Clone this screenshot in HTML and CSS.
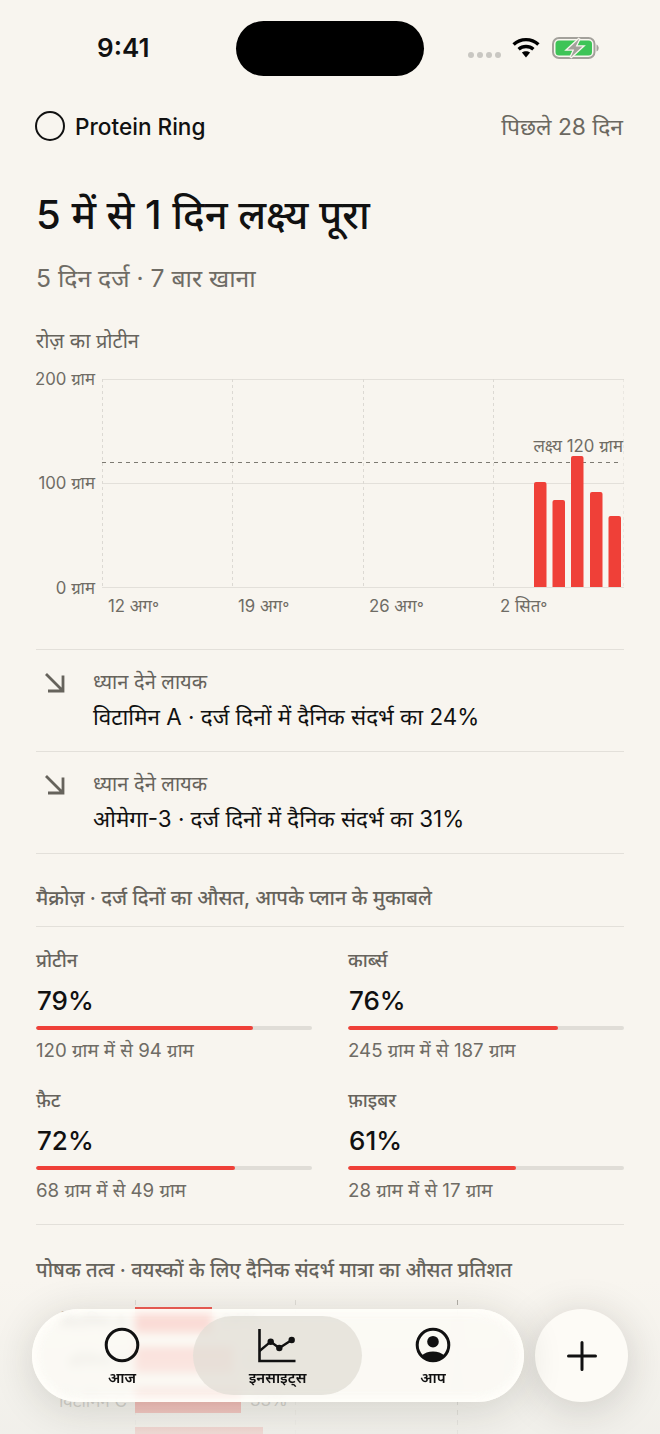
FILE: index.html
```html
<!DOCTYPE html>
<html lang="hi">
<head>
<meta charset="utf-8">
<title>Insights</title>
<link rel="stylesheet" href="styles.css">
</head>
<body>
<div class="screen">
  <div class="status">
    <span class="time">9:41</span>
    <div class="island"></div>
    <div class="status-icons">
      <svg class="dots" width="33" height="6" viewBox="0 0 33 6"><g fill="#c9c7c2"><circle cx="3" cy="3" r="3"/><circle cx="12" cy="3" r="3"/><circle cx="21" cy="3" r="3"/><circle cx="30" cy="3" r="3"/></g></svg>
      <svg class="wifi" width="28" height="21" viewBox="0 0 28 21"><g fill="none" stroke="#000" stroke-width="3.4"><path d="M1.6 7.6C8.6.9 19.4.9 26.4 7.6"/><path d="M6.6 12.2c4.2-3.7 10.6-3.7 14.8 0"/></g><path d="M9.9 15.6c2.4-1.9 5.8-1.900 8.200 0L14 20.6z" fill="#000"/></svg>
      <svg class="battery" width="47" height="22" viewBox="0 0 47 22"><rect x="1" y="1" width="41.500" height="20" rx="6" fill="none" stroke="#a3a19b" stroke-width="2"/><rect x="3.500" y="3.500" width="36.500" height="15" rx="3.500" fill="#3ec457"/><path d="M44.500 7.500c1.300.5 2.200 2 2.200 3.500s-.9 3-2.200 3.500z" fill="#a3a19b"/><path d="M27.500 1.500 15.500 12.500h6.700L18.500 20.500 30.500 9.500h-6.800z" fill="#a3a19b" stroke="#f8f5ef" stroke-width="2.600" paint-order="stroke"/></svg>
    </div>
  </div>

  <main class="content">
    <header class="top">
      <div class="brand"><span class="brand-ring"></span><span class="brand-name">Protein Ring</span></div>
      <span class="range">पिछले 28 दिन</span>
    </header>

    <h1 class="title">5 में से 1 दिन लक्ष्य पूरा</h1>
    <p class="subtitle">5 दिन दर्ज · 7 बार खाना</p>

    <h2 class="section-label chart-label">रोज़ का प्रोटीन</h2>

    <svg class="chart" width="588" height="250" viewBox="36 370 588 250">
      <g stroke="#e3e0da" stroke-width="1" fill="none">
        <path d="M102 379.500H624M102 483.500H624M102 587.500H624"/>
      </g>
      <g stroke="#dcd9d3" stroke-width="1" stroke-dasharray="3 3" fill="none">
        <path d="M102.500 379V587M232.500 379V587M363.500 379V587M493.500 379V587M624 379V587"/>
      </g>
      <path d="M102 462.500H620" stroke="#7d7a72" stroke-width="1" stroke-dasharray="4 4" fill="none"/>
      <g fill="#ef4038">
        <path d="M534 587V484a2 2 0 0 1 2-2h8.500a2 2 0 0 1 2 2V587z"/>
        <path d="M552.500 587V502a2 2 0 0 1 2-2h8.500a2 2 0 0 1 2 2V587z"/>
        <path d="M571 587V458a2 2 0 0 1 2-2h8.500a2 2 0 0 1 2 2V587z"/>
        <path d="M590 587V494a2 2 0 0 1 2-2h8.500a2 2 0 0 1 2 2V587z"/>
        <path d="M608.500 587V518a2 2 0 0 1 2-2h8.500a2 2 0 0 1 2 2V587z"/>
      </g>
      <g class="axis-text">
        <text x="95" y="385" text-anchor="end">200 ग्राम</text>
        <text x="95" y="489" text-anchor="end">100 ग्राम</text>
        <text x="95" y="594" text-anchor="end">0 ग्राम</text>
        <text x="108" y="612">12 अग॰</text>
        <text x="238" y="612">19 अग॰</text>
        <text x="369" y="612">26 अग॰</text>
        <text x="500" y="612">2 सित॰</text>
        <text x="623" y="452" text-anchor="end">लक्ष्य 120 ग्राम</text>
      </g>
    </svg>

    <section class="notes">
      <div class="note">
        <svg class="note-icon" width="20" height="20" viewBox="0 0 20 20"><path d="M1 1 18 18M18 2.500V18H3" fill="none" stroke="#66635c" stroke-width="2.800"/></svg>
        <div class="note-body">
          <div class="note-tag">ध्यान देने लायक</div>
          <div class="note-text">विटामिन A · दर्ज दिनों में दैनिक संदर्भ का 24%</div>
        </div>
      </div>
      <div class="note">
        <svg class="note-icon" width="20" height="20" viewBox="0 0 20 20"><path d="M1 1 18 18M18 2.500V18H3" fill="none" stroke="#66635c" stroke-width="2.800"/></svg>
        <div class="note-body">
          <div class="note-tag">ध्यान देने लायक</div>
          <div class="note-text">ओमेगा-3 · दर्ज दिनों में दैनिक संदर्भ का 31%</div>
        </div>
      </div>
    </section>

    <h2 class="section-label macro-label">मैक्रोज़ · दर्ज दिनों का औसत, आपके प्लान के मुकाबले</h2>

    <section class="macros">
      <div class="macro">
        <div class="macro-name">प्रोटीन</div>
        <div class="macro-pct">79%</div>
        <div class="track"><div class="fill" style="width:78.600%"></div></div>
        <div class="macro-sub">120 ग्राम में से 94 ग्राम</div>
      </div>
      <div class="macro">
        <div class="macro-name">कार्ब्स</div>
        <div class="macro-pct">76%</div>
        <div class="track"><div class="fill" style="width:76%"></div></div>
        <div class="macro-sub">245 ग्राम में से 187 ग्राम</div>
      </div>
      <div class="macro">
        <div class="macro-name">फ़ैट</div>
        <div class="macro-pct">72%</div>
        <div class="track"><div class="fill" style="width:72%"></div></div>
        <div class="macro-sub">68 ग्राम में से 49 ग्राम</div>
      </div>
      <div class="macro">
        <div class="macro-name">फ़ाइबर</div>
        <div class="macro-pct">61%</div>
        <div class="track"><div class="fill" style="width:61%"></div></div>
        <div class="macro-sub">28 ग्राम में से 17 ग्राम</div>
      </div>
    </section>

    <h2 class="section-label nutrient-label">पोषक तत्व · वयस्कों के लिए दैनिक संदर्भ मात्रा का औसत प्रतिशत</h2>

    <section class="nutrients">
      <span class="gridline gridline-a"></span>
      <span class="gridline gridline-b"></span>
      <span class="gridline gridline-c"></span>
      <div class="nutrient"><span class="nutrient-name">विटामिन A</span><div class="nutrient-bar" style="width:77px"></div><span class="nutrient-val">24%</span></div>
      <div class="nutrient"><span class="nutrient-name">ओमेगा-3</span><div class="nutrient-bar" style="width:98px"></div><span class="nutrient-val">31%</span></div>
      <div class="nutrient"><span class="nutrient-name">विटामिन C</span><div class="nutrient-bar" style="width:106px"></div><span class="nutrient-val">33%</span></div>
      <div class="nutrient"><span class="nutrient-name"></span><div class="nutrient-bar" style="width:128px"></div></div>
    </section>
  </main>

  <div class="fade"></div>

  <nav class="dock">
    <div class="tabbar">
      <div class="tab">
        <svg width="36" height="36" viewBox="0 0 36 36"><circle cx="18" cy="18" r="15.800" fill="none" stroke="#111" stroke-width="3"/></svg>
        <span>आज</span>
      </div>
      <div class="tab tab-active">
        <svg width="40" height="36" viewBox="0 0 40 36"><path d="M1.500 2V34H37.500" fill="none" stroke="#111" stroke-width="2.600"/><path d="M1.500 24 12.700 14.700 21.300 21 33.700 13" fill="none" stroke="#111" stroke-width="2.400"/><g fill="#111"><circle cx="12.700" cy="14.700" r="3.200"/><circle cx="21.300" cy="21" r="3.200"/><circle cx="33.700" cy="13" r="3.200"/></g></svg>
        <span>इनसाइट्स</span>
      </div>
      <div class="tab">
        <svg width="36" height="36" viewBox="0 0 36 36"><circle cx="18" cy="18" r="15.800" fill="none" stroke="#111" stroke-width="3"/><circle cx="18" cy="14.700" r="5.800" fill="#111"/><path d="M6 29C9.500 26 13.500 24.600 18 24.600S26.500 26 30 29C27 32 22.500 33.500 18 33.500S9 32 6 29z" fill="#111"/></svg>
        <span>आप</span>
      </div>
    </div>
    <button class="add" type="button" aria-label="जोड़ें">
      <svg width="30" height="30" viewBox="0 0 30 30"><path d="M15 1.500V28.500M1.500 15H28.500" fill="none" stroke="#111" stroke-width="3" stroke-linecap="round"/></svg>
    </button>
  </nav>
</div>
</body>
</html>
```
FILE: styles.css
```css
* { box-sizing: border-box; margin: 0; padding: 0; }
html, body { width: 660px; height: 1434px; overflow: hidden; }
body {
  background: #f8f5ef;
  color: #111;
  font-family: Inter, "Noto Sans", "Noto Sans Devanagari", "Lohit Devanagari", sans-serif;
}
.screen { position: relative; width: 660px; height: 1434px; overflow: hidden; }

.status { height: 96px; position: relative; }
.time { position: absolute; left: 97px; top: 32px; font-size: 26px; font-weight: 600; line-height: 32px; }
.island { position: absolute; left: 236px; top: 21px; width: 188px; height: 55px; border-radius: 28px; background: #000; }
.status-icons { position: absolute; left: 468px; top: 37px; width: 132px; height: 22px; }
.dots { position: absolute; left: 0; top: 15px; }
.wifi { position: absolute; left: 44px; top: 0; }
.battery { position: absolute; left: 84px; top: 0; }

.content { padding: 0 36px; }
.top { display: flex; justify-content: space-between; align-items: center; height: 60px; }
.brand { display: flex; align-items: center; gap: 10px; margin-left: -1px; }
.brand-ring { width: 30px; height: 30px; border: 2.500px solid #111; border-radius: 50%; }
.brand-name { font-size: 22.600px; font-weight: 500; }
.range { font-size: 22.800px; color: #6b6860; padding-right: 1px; }

.title { font-size: 40px; font-weight: 500; line-height: 50px; margin: 34px 0 0; }
.subtitle { font-size: 24.700px; color: #6f6c65; line-height: 32px; margin: 22px 0 0; }

.section-label { font-size: 20px; font-weight: 400; color: #66635c; line-height: 24px; }
.chart-label { margin-top: 35px; }
.chart { display: block; margin-top: 17px; }
.axis-text text { font-size: 16.800px; fill: #6f6c65; }

.notes { margin-top: 29px; border-top: 1px solid #e3e0da; }
.note { display: flex; height: 102px; border-bottom: 1px solid #e3e0da; padding: 23px 0 0 9px; }
.note-icon { flex: none; margin-right: 28px; }
.note-tag { font-size: 20px; color: #66635c; line-height: 20px; margin-top: -1px; }
.note-text { font-size: 22.400px; line-height: 28px; margin-top: 11px; }

.macro-label { margin-top: 32px; padding-bottom: 16px; border-bottom: 1px solid #e3e0da; font-weight: 500; }
.macros { display: grid; grid-template-columns: 276px 276px; column-gap: 36px; row-gap: 26px; padding: 22px 0 21px; border-bottom: 1px solid #e3e0da; }
.macro-name { font-size: 18.800px; color: #66635c; line-height: 24px; font-weight: 500; }
.macro-pct { font-size: 26px; font-weight: 500; line-height: 30px; margin: 13px 0 0 1px; }
.track { height: 4px; border-radius: 2px; background: #e0ddd7; margin-top: 10px; overflow: hidden; }
.fill { height: 100%; background: #ef4038; border-radius: 2px; }
.macro-sub { font-size: 18.700px; color: #6f6c65; line-height: 24px; margin-top: 9px; }

.nutrient-label { margin-top: 33px; font-weight: 500; }
.nutrients { position: relative; display: flex; flex-direction: column; gap: 14px; margin-top: 25px; }
.nutrient { display: flex; align-items: center; height: 26px; }
.nutrient-name { width: 99px; font-size: 17px; color: #807d76; text-align: right; padding-right: 8px; white-space: nowrap; }
.nutrient-bar { height: 26px; background: #ef4038; position: relative; }
.nutrient-val { margin-left: 9px; font-size: 17px; color: #807d76; }
.gridline { position: absolute; top: -7px; bottom: -20px; width: 1px; background: repeating-linear-gradient(to bottom, #8d8a82 0 5px, transparent 5px 10px); }
.gridline-a { left: 99px; opacity: 0.25; }
.gridline-b { left: 259px; opacity: 0.25; }
.gridline-c { left: 421px; opacity: 0.75; }

.fade { position: absolute; left: 0; right: 0; top: 1280px; bottom: 0; background: linear-gradient(to bottom, rgba(240,239,234,0), rgba(240,239,234,0.89)); pointer-events: none; }

.dock { position: absolute; left: 32px; top: 1309px; display: flex; gap: 11px; }
.tabbar {
  width: 492px; height: 93px; border-radius: 47px; padding: 7px 20px 7px 19px;
  display: grid; grid-template-columns: 142px 169px 142px;
  background: rgba(253,251,246,0.78);
  backdrop-filter: blur(4px);
  box-shadow: 0 6px 40px rgba(40,35,25,0.16), inset 0 0 9px 5px rgba(255,254,250,0.95);
}
.tab { display: flex; flex-direction: column; align-items: center; justify-content: flex-start; padding-top: 11px; gap: 6px; border-radius: 40px; }
.tab span { font-size: 15px; font-weight: 600; line-height: 18px; }
.tab-active { background: rgba(224,221,214,0.75); }
.add {
  width: 93px; height: 93px; border: none; border-radius: 50%;
  background: #fdfbf6;
  display: flex; align-items: center; justify-content: center;
  box-shadow: 0 6px 40px rgba(40,35,25,0.18);
}
```
